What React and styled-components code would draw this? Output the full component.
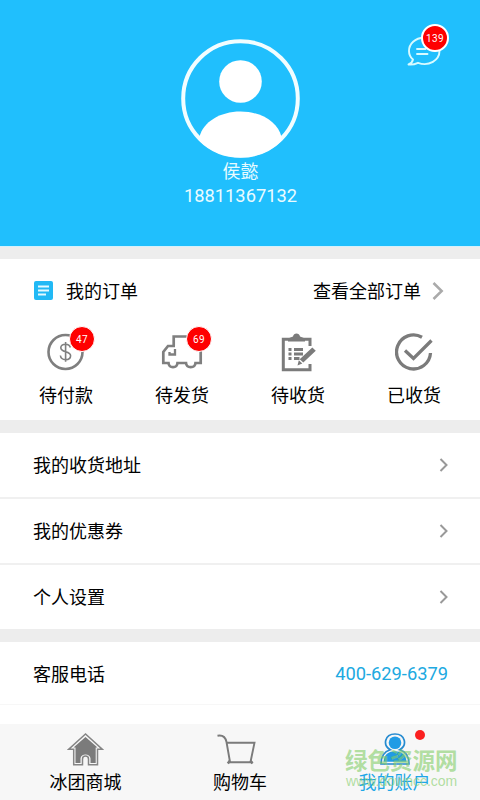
import React from 'react'
import styled, { createGlobalStyle } from 'styled-components';

const GlobalStyle = createGlobalStyle`
    * {
        box-sizing: border-box;
    }

    body {
        margin: 0;
        background-color: #ededed;
        font-family: Roboto, "Noto Sans CJK SC", sans-serif;
        font-size: 18px;
        color: #000;
    }

    svg {
        display: block;
        flex-shrink: 0;
    }
`

const Container = styled.div`
    width: 480px;
    height: 800px;
    display: flex;
    flex-direction: column;
    overflow: hidden;

    > * {
        flex-shrink: 0;
    }
`

const Header = styled.header`
    position: relative;
    height: 247px;
    padding-top: 38px;
    display: flex;
    flex-direction: column;
    align-items: center;
    background-color: #20bffd;
    border-bottom: 1px solid #d5f1fc;
    color: #e9fbff;
`

const Name = styled.div`
    height: 26px;
    line-height: 26px;
    padding-left: 1px;
`

const Phone = styled.div`
    height: 22px;
    line-height: 22px;
    padding-left: 1px;
    font-size: 18.3px;
`

const Message = styled.div`
    position: absolute;
    top: 24px;
    right: 30px;
    width: 44px;
    height: 44px;
`

const Badge = styled.span`
    position: absolute;
    top: ${(props) => props.$top}px;
    left: ${(props) => props.$left}px;
    width: ${(props) => props.$size}px;
    height: ${(props) => props.$size}px;
    display: flex;
    align-items: center;
    justify-content: center;
    border: ${(props) => (props.$ring ? 2 : 1)}px solid #fff;
    border-radius: 50%;
    background-color: #fe0000;
    color: #fff;
    font-size: 10px;
    letter-spacing: 0.3px;
`

const Orders = styled.section`
    height: 161px;
    margin-top: 12px;
    background-color: #fff;
`

const OrdersTop = styled.div`
    height: 63px;
    padding: 0 36px 0 34px;
    display: flex;
    align-items: center;
`

const OrdersTitle = styled.div`
    flex: 1;
    margin-left: 13px;
    padding-bottom: 1px;
`

const OrdersAll = styled.div`
    margin-right: 11px;
    padding-bottom: 1px;
`

const Statuses = styled.div`
    display: grid;
    grid-template-columns: repeat(4, 116px);
    padding: 1px 0 0 8px;
`

const Status = styled.div`
    display: flex;
    flex-direction: column;
    align-items: center;
`

const StatusIcon = styled.div`
    position: relative;
    height: 59px;
    padding-top: 10px;
`

const StatusLabel = styled.div`
    height: 28px;
    line-height: 28px;
`

const Menu = styled.section`
    margin-top: 13px;
    background-color: #fff;
`

const MenuItem = styled.div`
    height: ${(props) => (props.$last ? 64 : 66)}px;
    padding: 0 31px 0 33px;
    display: flex;
    align-items: center;
    justify-content: space-between;
    border-bottom: ${(props) => (props.$last ? 'none' : '2px solid #f0f0f0')};
`

const MenuLabel = styled.span`
    padding-bottom: 2px;
`

const Service = styled.section`
    height: 82px;
    margin-top: 13px;
    background-color: #fff;
`

const ServiceRow = styled.div`
    height: 63px;
    padding: 0 32px 0 33px;
    display: flex;
    align-items: center;
    justify-content: space-between;
    border-bottom: 1px solid #f7f7f7;
`

const ServicePhone = styled.span`
    color: #20a9e1;
    font-size: 18.3px;
`

const TabBar = styled.nav`
    position: relative;
    height: 76px;
    display: grid;
    grid-template-columns: 171px 138px 171px;
    background-color: #f7f7f7;
`

const Tab = styled.div`
    position: relative;
    display: flex;
    flex-direction: column;
    align-items: center;
    color: ${(props) => (props.$active ? '#1fa7e6' : '#000')};
`

const TabIcon = styled.div`
    height: 45px;
    padding-top: 8px;
`

const TabLabel = styled.div`
    height: 28px;
    line-height: 28px;
`

const Dot = styled.span`
    position: absolute;
    top: 6px;
    left: 106px;
    width: 10px;
    height: 10px;
    border-radius: 50%;
    background-color: #fb2020;
`

const Watermark = styled.div`
    position: absolute;
    top: 23px;
    left: 345px;
    width: 114px;
    color: rgba(132, 205, 105, 0.62);
    white-space: nowrap;
`

const WatermarkName = styled.div`
    height: 26px;
    line-height: 28px;
    font-size: 22.5px;
    font-weight: 700;
`

const WatermarkUrl = styled.div`
    height: 16px;
    padding-left: 1px;
    line-height: 17px;
    font-family: "Liberation Sans", sans-serif;
    font-size: 14px;
`

const Avatar = () => (
    <svg width="120" height="121" viewBox="0 0 120 121">
        <clipPath id="avatar">
            <circle cx="60.500" cy="60.500" r="59" />
        </clipPath>
        <circle cx="60.500" cy="60.500" r="57.300" fill="none" stroke="#f2fdff" strokeWidth="4" />
        <circle cx="60.500" cy="43.500" r="21.300" fill="#fff" />
        <path d="M19.500 99C23 84 40 73.500 60.500 73.500S98 84 101.500 99V122H19.500Z" fill="#fff" clipPath="url(#avatar)" />
    </svg>
)

const Chat = () => (
    <svg width="44" height="44" viewBox="0 0 44 44" fill="none" stroke="#d8faff" strokeWidth="1.9" strokeLinejoin="round" strokeLinecap="round">
        <path d="M18 13.500C9 14 3 20 3 27C3 31 4.500 33.500 7 35.500C6.500 38 5 39.500 2.500 40.500C6.500 41 9.500 40 12 38.800C23 43 33.500 36 33.500 27" />
        <path d="M11 25H19.500M11 30H21.500" />
    </svg>
)

const ListIcon = () => (
    <svg width="19" height="19" viewBox="0 0 19 19">
        <rect width="19" height="19" rx="2" fill="#21b9f5" />
        <path d="M4 5.500H15M4 9.500H15M4 13.500H12" stroke="#e4faff" strokeWidth="2" />
    </svg>
)

const Arrow = ({ big }) => (
    <svg width={big ? 12 : 10} height={big ? 18 : 14} viewBox={big ? '0 0 12 18' : '0 0 10 14'} fill="none" stroke={big ? '#aaa' : '#999'} strokeWidth={big ? 2.5 : 2}>
        <path d={big ? 'M1.500 1L9.700 9L1.500 17' : 'M1.500 1L7.500 7L1.500 13'} />
    </svg>
)

const Money = () => (
    <svg width="38" height="38" viewBox="0 0 38 38" fill="none" stroke="#7f7f7f">
        <circle cx="18.500" cy="19" r="17" strokeWidth="2.600" />
        <path d="M23.300 14.500C22.800 12.200 21 11.200 18.500 11.200C15.800 11.200 13.800 12.500 13.800 14.700C13.800 20 23.600 17.300 23.600 22.700C23.600 25 21.500 26.600 18.600 26.600C15.700 26.600 13.700 25 13.400 22.500M18.600 9V28.800" strokeWidth="1.600" />
    </svg>
)

const Truck = () => (
    <svg width="42" height="38" viewBox="0 1 42 38" fill="none" stroke="#7f7f7f" strokeWidth="2.700">
        <path d="M12.700 14V4.500H39.700V31H34.500C34 36.500 25.500 36.500 25 31H16.500C16 36.500 8 36.500 7.500 31H2.300V20L7 14H14" />
        <path d="M14 17V22.500H8.500V20" strokeWidth="2.300" />
    </svg>
)

const Clipboard = () => (
    <svg width="38" height="40" viewBox="0 0 38 40">
        <path d="M31 13V6.200H4.300V36.700H31V31" fill="none" stroke="#7b7b7b" strokeWidth="3" />
        <path d="M9 8.500V5.500L14 3.500C14.500 -.5 20.500 -.5 21 3.500L26 5.500V8.500Z" fill="#7b7b7b" />
        <path d="M9.500 16.500H12.500M15 16.500H24M9.500 21H12.500M15 21H24M9.500 25.500H12.500M15 25.500H20.500" stroke="#7b7b7b" strokeWidth="2.900" />
        <path d="M33.300 14.500L36.800 17.700L24.300 29.500L20.700 26.200ZM19.800 27.200L23.300 30.500L18.500 32.500Z" fill="#7b7b7b" />
    </svg>
)

const Done = () => (
    <svg width="38" height="39" viewBox="0 0 38 39" fill="none" stroke="#7b7b7b" strokeWidth="3.300">
        <path d="M27 4.200A17 17 0 1 0 35.500 20" />
        <path d="M10 17.500L18.500 25.500L36.500 7.500" />
    </svg>
)

const House = () => (
    <svg width="37" height="34" viewBox="0 0 37 34">
        <path d="M18.500 2L1.800 17.200H6.700V32.700H15.500V27C15.500 23 21.500 23 21.500 27V32.700H30.500V17.200H35.200Z" fill="none" stroke="#858585" strokeWidth="1.500" />
        <path d="M18.500 5L6.500 15.500H8.500V31H13.500V26.500C13.800 21 23.200 21 23.500 26.500V31H28.700V15.500H30.500Z" fill="#7b7b7b" />
    </svg>
)

const Cart = () => (
    <svg width="46" height="34" viewBox="0 0 46 34" fill="none" stroke="#7b7b7b" strokeWidth="1.900">
        <path d="M.5 3.700C6 2.700 8.500 5 9.500 10L13 30M10 10.800H37.500L33.500 30M11 30.300H35.500" />
        <path d="M12.800 28.800L10.800 31.500M33.500 28.800L35.500 31.500" strokeWidth="2.500" />
    </svg>
)

const Person = () => (
    <svg width="32" height="34" viewBox="0 0 32 34">
        <path d="M11.300 17.700C3.500 13.500 5.500 2 16 2S28.500 13.500 20.700 17.700C27 19.500 30 24 30 32H2C2 24 5 19.500 11.300 17.700Z" fill="none" stroke="#268bd0" strokeWidth="1.700" />
        <circle cx="16" cy="10.800" r="6.300" fill="#219be5" />
        <path d="M4.500 29.700C5 22.500 9.500 19.300 16 19.300S27 22.500 27.500 29.700Z" fill="#219be5" />
    </svg>
)

const statuses = [
    { label: '待付款', icon: <Money />, count: 47, left: 22 },
    { label: '待发货', icon: <Truck />, count: 69, left: 25 },
    { label: '待收货', icon: <Clipboard /> },
    { label: '已收货', icon: <Done /> },
]

const menu = ['我的收货地址', '我的优惠券', '个人设置']

const App = () => {
  return (
    <Container>
        <GlobalStyle />
        <Header>
            <Avatar />
            <Name>侯懿</Name>
            <Phone>18811367132</Phone>
            <Message>
                <Chat />
                <Badge $top={0} $left={15} $size={28} $ring>139</Badge>
            </Message>
        </Header>
        <Orders>
            <OrdersTop>
                <ListIcon />
                <OrdersTitle>我的订单</OrdersTitle>
                <OrdersAll>查看全部订单</OrdersAll>
                <Arrow big />
            </OrdersTop>
            <Statuses>
                {statuses.map((item) => (
                    <Status key={item.label}>
                        <StatusIcon>
                            {item.icon}
                            {item.count && <Badge $top={3} $left={item.left} $size={26}>{item.count}</Badge>}
                        </StatusIcon>
                        <StatusLabel>{item.label}</StatusLabel>
                    </Status>
                ))}
            </Statuses>
        </Orders>
        <Menu>
            {menu.map((label, i) => (
                <MenuItem key={label} $last={i === menu.length - 1}>
                    <MenuLabel>{label}</MenuLabel>
                    <Arrow />
                </MenuItem>
            ))}
        </Menu>
        <Service>
            <ServiceRow>
                客服电话
                <ServicePhone>400-629-6379</ServicePhone>
            </ServiceRow>
        </Service>
        <TabBar>
            <Tab>
                <TabIcon><House /></TabIcon>
                <TabLabel>冰团商城</TabLabel>
            </Tab>
            <Tab>
                <TabIcon><Cart /></TabIcon>
                <TabLabel>购物车</TabLabel>
            </Tab>
            <Tab $active>
                <TabIcon><Person /></TabIcon>
                <TabLabel>我的账户</TabLabel>
                <Dot />
            </Tab>
            <Watermark>
                <WatermarkName>绿色资源网</WatermarkName>
                <WatermarkUrl>www.downcc.com</WatermarkUrl>
            </Watermark>
        </TabBar>
    </Container>
  )
}

export default App
